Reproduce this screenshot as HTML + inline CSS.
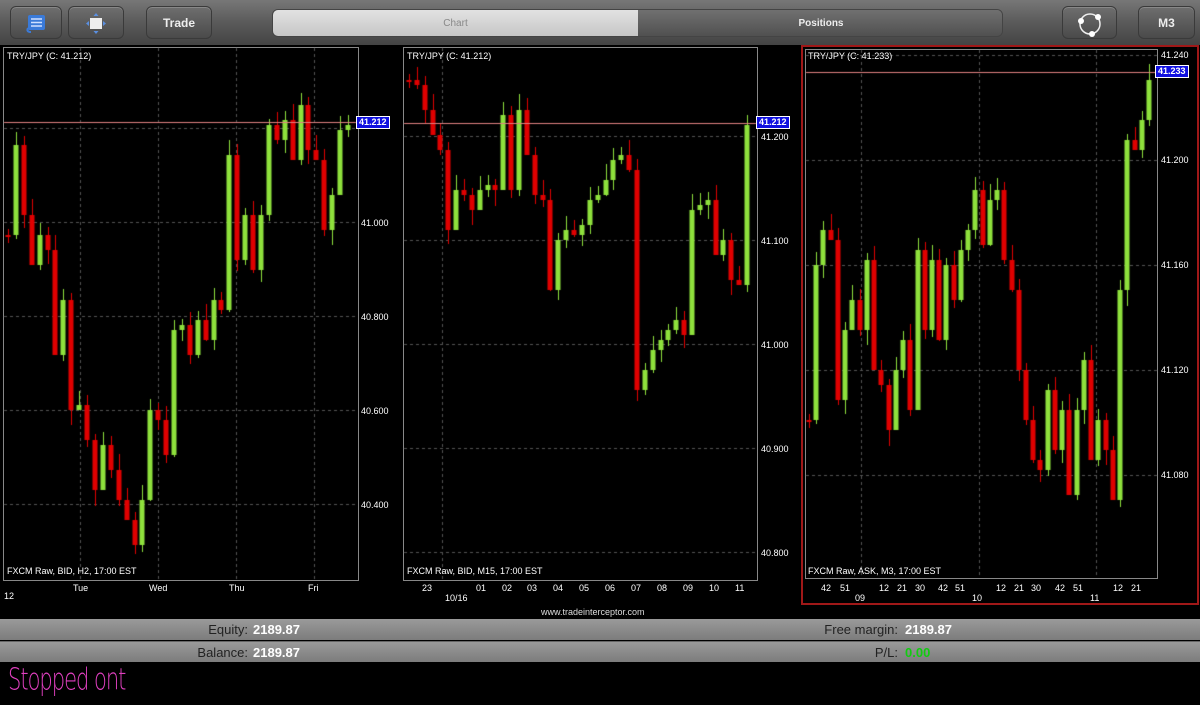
<!DOCTYPE html><html><head><meta charset="utf-8"><style>
*{margin:0;padding:0;box-sizing:border-box}
body{width:1200px;height:705px;background:#000;position:relative;overflow:hidden;font-family:"Liberation Sans",sans-serif;color:#fff}
.abs{position:absolute}
#top{left:0;top:0;width:1200px;height:45px;background:linear-gradient(#777,#5a5a5a 50%,#444)}
.btn{position:absolute;top:6px;height:33px;border-radius:6px;background:linear-gradient(#6e6e6e,#4a4a4a);border:1px solid #3a3a3a;box-shadow:inset 0 1px 0 #888;font-weight:bold;font-size:12px;color:#eee;text-align:center;line-height:33px}
.box{position:absolute;border:1px solid #888}
.t{position:absolute;font-size:9px;color:#fff;white-space:nowrap}
.bar{position:absolute;left:0;width:1200px;height:21px;background:linear-gradient(#9a9a9a,#7c7c7c);font-size:13px;line-height:21px}
.lab{position:absolute;color:#222;text-align:right}
.val{position:absolute;color:#fff;font-weight:bold}
.tag{position:absolute;background:#1010e0;border:1px solid #fff;font-size:9px;font-weight:bold;padding:0 2px;height:13px;line-height:11px}
</style></head><body>
<div id="top" class="abs"></div>
<div class="btn" style="left:10px;width:52px"><svg width="24" height="22" style="margin-top:6px"><rect x="4" y="2" width="17" height="15" rx="2" fill="#3a7ad8"/><path d="M7 6h11M7 9.5h11M7 13h11" stroke="#cfe0ff" stroke-width="1.5"/><path d="M4 15 q-2 4 3 4" stroke="#3a7ad8" stroke-width="2" fill="none"/></svg></div>
<div class="btn" style="left:68px;width:56px"><svg width="30" height="26" style="margin-top:3px"><rect x="9" y="8" width="12" height="11" fill="#eee"/><path d="M15 3l-2.5 3h5z M15 24l-2.5-3h5z M5 13.5l3-2.5v5z M25 13.5l-3-2.5v5z" fill="#5a8fe0"/></svg></div>
<div class="btn" style="left:146px;width:66px">Trade</div>
<div class="abs" style="left:272px;top:9px;width:731px;height:28px;border-radius:6px;overflow:hidden;border:1px solid #444">
<div class="abs" style="left:0;top:0;width:365px;height:28px;background:linear-gradient(#e2e2e2,#c4c4c4);color:#888;font-size:10px;text-align:center;line-height:27px">Chart</div>
<div class="abs" style="left:365px;top:0;width:366px;height:28px;background:linear-gradient(#707070,#4e4e4e);color:#eee;font-size:10px;font-weight:bold;text-align:center;line-height:27px">Positions</div></div>
<div class="btn" style="left:1062px;width:55px"><svg width="30" height="30" style="margin-top:2px"><circle cx="15" cy="15" r="10" stroke="#eee" stroke-width="1.5" fill="none"/><circle cx="6" cy="12" r="3" fill="#fff"/><circle cx="23" cy="8" r="3" fill="#fff"/><circle cx="17" cy="25" r="3" fill="#fff"/></svg></div>
<div class="btn" style="left:1138px;width:57px">M3</div>

<div class="box" style="left:3px;top:47px;width:356px;height:534px"></div>
<div class="box" style="left:403px;top:47px;width:355px;height:534px"></div>
<div class="abs" style="left:801px;top:45px;width:398px;height:560px;border:2px solid #a01818"></div>
<div class="box" style="left:805px;top:49px;width:353px;height:530px"></div>
<canvas id="c" width="1200" height="705" class="abs" style="left:0;top:0"></canvas>

<div class="t" style="left:7px;top:51px">TRY/JPY (C: 41.212)</div>
<div class="t" style="left:407px;top:51px">TRY/JPY (C: 41.212)</div>
<div class="t" style="left:808px;top:51px">TRY/JPY (C: 41.233)</div>
<div class="t" style="left:7px;top:566px">FXCM Raw, BID, H2, 17:00 EST</div>
<div class="t" style="left:407px;top:566px">FXCM Raw, BID, M15, 17:00 EST</div>
<div class="t" style="left:808px;top:566px">FXCM Raw, ASK, M3, 17:00 EST</div>

<div class="t" style="left:361px;top:218px">41.000</div>
<div class="t" style="left:361px;top:312px">40.800</div>
<div class="t" style="left:361px;top:406px">40.600</div>
<div class="t" style="left:361px;top:500px">40.400</div>
<div class="tag" style="left:356px;top:116px">41.212</div>
<div class="t" style="left:761px;top:132px">41.200</div>
<div class="t" style="left:761px;top:236px">41.100</div>
<div class="t" style="left:761px;top:340px">41.000</div>
<div class="t" style="left:761px;top:444px">40.900</div>
<div class="t" style="left:761px;top:548px">40.800</div>
<div class="tag" style="left:756px;top:116px">41.212</div>
<div class="t" style="left:1161px;top:50px">41.240</div>
<div class="t" style="left:1161px;top:155px">41.200</div>
<div class="t" style="left:1161px;top:260px">41.160</div>
<div class="t" style="left:1161px;top:365px">41.120</div>
<div class="t" style="left:1161px;top:470px">41.080</div>
<div class="tag" style="left:1155px;top:65px">41.233</div>

<div id="xl"></div>
<div class="t" style="left:541px;top:607px;color:#ddd">www.tradeinterceptor.com</div>

<div class="bar" style="top:619px"><span class="lab" style="right:952px">Equity:</span><span class="val" style="left:253px">2189.87</span><span class="lab" style="right:302px">Free margin:</span><span class="val" style="left:905px">2189.87</span></div>
<div class="bar" style="top:641px;border-top:1px solid #666"><span class="lab" style="right:952px">Balance:</span><span class="val" style="left:253px">2189.87</span><span class="lab" style="right:302px">P/L:</span><span class="val" style="left:905px;color:#1c1">0.00</span></div>
<div class="abs" style="left:8px;top:662px;font-family:'DejaVu Sans',sans-serif;font-size:21px;color:#e040c0;font-weight:200;letter-spacing:-1px;transform:scaleY(1.45);transform-origin:top left">Stopped ont</div>

<script>
var x=document.getElementById('c').getContext('2d');
function grid(x0,x1,y0,y1,hs,vs){x.strokeStyle='#555';x.setLineDash([3,3]);x.lineWidth=1;
hs.forEach(h=>{x.beginPath();x.moveTo(x0,h+.5);x.lineTo(x1,h+.5);x.stroke()});
vs.forEach(v=>{x.beginPath();x.moveTo(v+.5,y0);x.lineTo(v+.5,y1);x.stroke()});x.setLineDash([])}
grid(4,358,48,580,[128,222,316,410,504],[80,158,236,314]);
grid(404,757,48,580,[136,240,344,448,552],[442]);
grid(806,1157,50,578,[55,160,265,370,475],[861,979,1096]);
function candles(x0,x1,ys,w){var n=ys.length,st=(x1-x0)/(n-1),p=ys[0];
for(var i=0;i<n;i++){var c=ys[i],o=p,cx=Math.round(x0+i*st);var g=c<o;
x.fillStyle=g?'#8ee03c':'#e00000';
var t=Math.min(o,c),b=Math.max(o,c);if(b-t<2)b=t+2;
x.fillRect(cx,t-6-((i*7)%11),1,b-t+12+((i*5)%15));
x.fillRect(cx-w/2,t,w,b-t);p=c}}
candles(8,348,[235,145,215,265,235,250,355,300,410,405,440,490,445,470,500,520,545,500,410,420,455,330,325,355,320,340,300,310,155,260,215,270,215,125,140,120,160,105,150,160,230,195,130,125],5);
candles(409,747,[80,85,110,135,150,230,190,195,210,190,185,190,115,190,110,155,195,200,290,240,230,235,225,200,195,180,160,155,170,390,370,350,340,330,320,335,210,205,200,255,240,280,285,125],5);
candles(809,1149,[420,265,230,240,400,330,300,330,260,370,385,430,370,340,410,250,330,260,340,265,300,250,230,190,245,200,190,260,290,370,420,460,470,390,450,410,495,410,360,460,420,450,500,290,140,150,120,80],5);
x.strokeStyle='#e08080';x.lineWidth=1;
[[4,356,122.5],[404,756,123.5],[806,1156,72.5]].forEach(a=>{x.beginPath();x.moveTo(a[0],a[2]);x.lineTo(a[1],a[2]);x.stroke()});
var L=[[73,'Tue',583],[149,'Wed',583],[229,'Thu',583],[308,'Fri',583],[4,'12',591],[422,'23',583],[476,'01',583],[502,'02',583],[527,'03',583],[553,'04',583],[579,'05',583],[605,'06',583],[631,'07',583],[657,'08',583],[683,'09',583],[709,'10',583],[735,'11',583],[445,'10/16',593],
[821,'42',583],[840,'51',583],[879,'12',583],[897,'21',583],[915,'30',583],[938,'42',583],[955,'51',583],[996,'12',583],[1014,'21',583],[1031,'30',583],[1055,'42',583],[1073,'51',583],[1113,'12',583],[1131,'21',583],[855,'09',593],[972,'10',593],[1090,'11',593]];
var h='';L.forEach(l=>{h+='<div class="t" style="left:'+l[0]+'px;top:'+l[2]+'px">'+l[1]+'</div>'});
document.getElementById('xl').innerHTML=h;
</script>
</body></html>
